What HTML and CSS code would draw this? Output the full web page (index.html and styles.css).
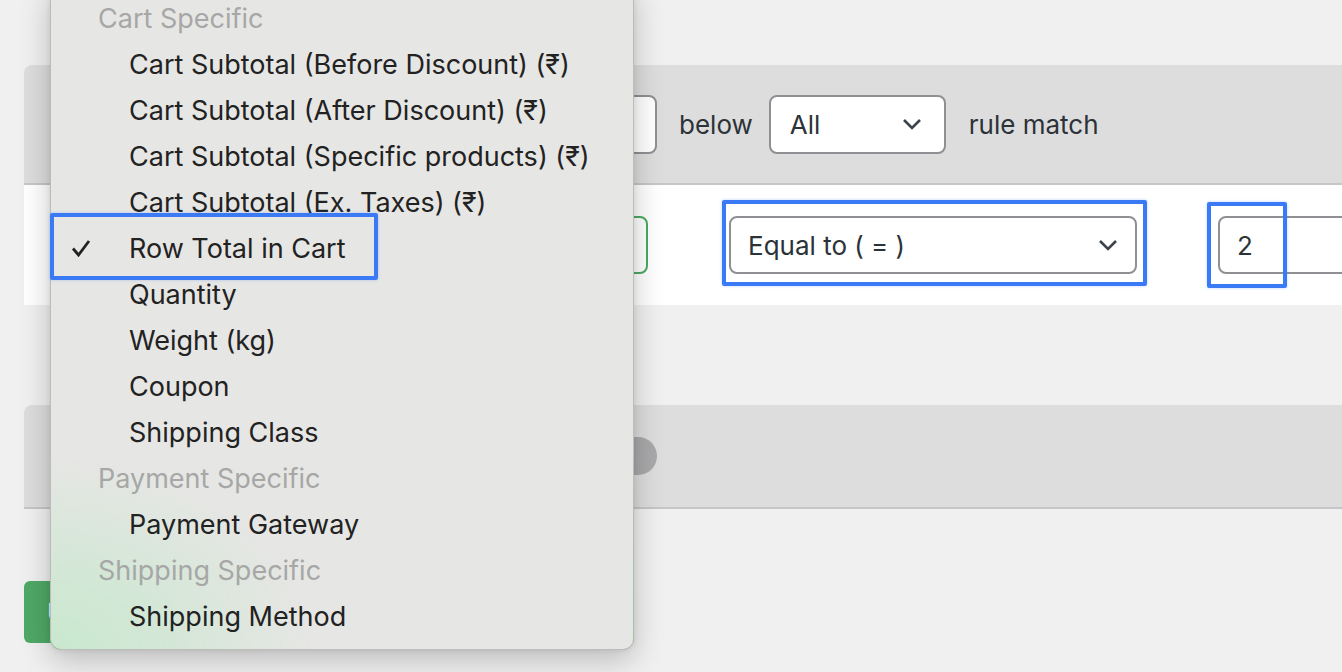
FILE: index.html
```html
<!DOCTYPE html>
<html lang="en">
<head>
    <meta charset="UTF-8">
    <meta name="viewport" content="width=device-width, initial-scale=1.0">
    <title>Shipping Rule</title>
    <link rel="stylesheet" href="styles.css">
</head>
<body>
    <div class="page">
        <div class="card">
            <div class="card-head">
                <div class="field field-rule">rule</div>
                <span class="label label-below">below</span>
                <div class="field field-match">
                    <span>All</span>
                    <svg class="chevron" viewBox="0 0 20 12"><polyline points="2,2 10,10 18,2"/></svg>
                </div>
                <span class="label label-match">rule match</span>
            </div>
            <div class="card-row">
                <div class="field field-type"></div>
                <div class="marked">
                    <div class="field field-op">
                        <span>Equal to ( = )</span>
                        <svg class="chevron" viewBox="0 0 20 12"><polyline points="2,2 10,10 18,2"/></svg>
                    </div>
                    <span class="mark mark-op"></span>
                </div>
                <div class="marked">
                    <div class="field field-value">2</div>
                    <span class="mark mark-value"></span>
                </div>
            </div>
        </div>

        <div class="card card-second">
            <div class="card-head card-head-short">
                <span class="toggle"></span>
            </div>
        </div>

        <button class="save">U</button>

        <!-- open dropdown of the condition type select -->
        <div class="menu">
            <div class="menu-group">Cart Specific</div>
            <div class="menu-item">Cart Subtotal (Before Discount) (₹)</div>
            <div class="menu-item">Cart Subtotal (After Discount) (₹)</div>
            <div class="menu-item">Cart Subtotal (Specific products) (₹)</div>
            <div class="menu-item">Cart Subtotal (Ex. Taxes) (₹)</div>
            <div class="menu-item selected">
                <svg class="check" viewBox="0 0 20 18"><polyline points="2,9.5 7.5,16 18,2"/></svg>
                Row Total in Cart
                <span class="mark mark-item"></span>
            </div>
            <div class="menu-item">Quantity</div>
            <div class="menu-item">Weight (kg)</div>
            <div class="menu-item">Coupon</div>
            <div class="menu-item">Shipping Class</div>
            <div class="menu-group">Payment Specific</div>
            <div class="menu-item">Payment Gateway</div>
            <div class="menu-group">Shipping Specific</div>
            <div class="menu-item">Shipping Method</div>
        </div>
    </div>
</body>
</html>
```

FILE: styles.css
```css
html, body {
    margin: 0;
    height: 100%;
    overflow: hidden;
}
body {
    background: #f0f0f0;
    font-family: Inter, "Noto Sans", sans-serif;
    color: #1f2327;
}
.page {
    position: relative;
    padding: 65px 0 0 24px;
}
.card {
    width: 1400px;
}
.card-head {
    display: flex;
    align-items: center;
    height: 118px;
    background: #dddddd;
    border-radius: 8px 8px 0 0;
    border-bottom: 2px solid #c6c6c8;
}
.card-row {
    display: flex;
    align-items: center;
    height: 120px;
    background: #fff;
    padding-left: 416px;
}
.field {
    display: flex;
    align-items: center;
    box-sizing: border-box;
    height: 59px;
    background: #fff;
    border: 2px solid #8f9094;
    border-radius: 8px;
    font-size: 26px;
    color: #2c3338;
}
.field-rule {
    width: 217px;
    margin-left: 416px;
    justify-content: flex-end;
    padding-right: 20px;
}
.label {
    font-size: 26px;
    color: #2c3338;
}
.label-below {
    margin: 0 16px 0 22px;
}
.field-match {
    width: 177px;
    padding: 0 22px 0 19px;
    justify-content: space-between;
}
.label-match {
    margin-left: 23px;
}
.chevron {
    width: 20px;
    height: 12px;
}
.chevron polyline {
    fill: none;
    stroke: #3c434a;
    stroke-width: 2.6;
}
.field-type {
    width: 208px;
    height: 58px;
    border-color: #4caa63;
}
.marked {
    position: relative;
    margin-left: 81px;
}
.field-op {
    width: 408px;
    height: 58px;
    padding: 0 17px;
    justify-content: space-between;
}
.field-value {
    width: 200px;
    height: 58px;
    padding-left: 17px;
}
.mark {
    position: absolute;
    border: 4px solid #3a7bf5;
    border-radius: 2px;
    box-shadow: 0 0 3px rgba(58, 123, 245, 0.35);
}
.mark-op {
    left: -7px;
    right: -10px;
    top: -16px;
    bottom: -12px;
}
.mark-value {
    left: -11px;
    width: 72px;
    top: -14px;
    bottom: -14px;
}
.card-second {
    margin-top: 100px;
}
.card-head-short {
    height: 102px;
}
.toggle {
    width: 60px;
    height: 38px;
    margin-left: 573px;
    border-radius: 19px;
    background: #a9a9ab;
}
.save {
    display: block;
    margin-top: 72px;
    width: 120px;
    height: 62px;
    padding: 0 0 0 23px;
    text-align: left;
    border: none;
    border-radius: 6px;
    background: #4fa866;
    color: #fff;
    font-family: inherit;
    font-size: 24px;
}
.menu {
    position: absolute;
    left: 50px;
    top: -15px;
    width: 584px;
    box-sizing: border-box;
    padding: 10px 0 9px;
    border: 1px solid rgba(0, 0, 0, 0.18);
    border-radius: 0 0 11px 11px;
    background:
        radial-gradient(ellipse 260px 190px at 0% 100%, rgba(200, 232, 206, 1) 0%, rgba(200, 232, 206, 0.6) 45%, rgba(230, 230, 228, 0) 100%),
        #e6e6e4;
    box-shadow: 0 10px 30px rgba(0, 0, 0, 0.22), 0 0 6px rgba(0, 0, 0, 0.08);
    font-size: 27px;
    line-height: 46px;
}
.menu-group {
    padding-left: 47px;
    color: #a6a7a6;
}
.menu-item {
    position: relative;
    padding-left: 78px;
    color: #222;
    white-space: nowrap;
}
.check {
    position: absolute;
    left: 20px;
    top: 13px;
    width: 20px;
    height: 18px;
}
.check polyline {
    fill: none;
    stroke: #222;
    stroke-width: 2.8;
}
.mark-item {
    left: -1px;
    width: 320px;
    top: -13px;
    bottom: -8px;
}
```
